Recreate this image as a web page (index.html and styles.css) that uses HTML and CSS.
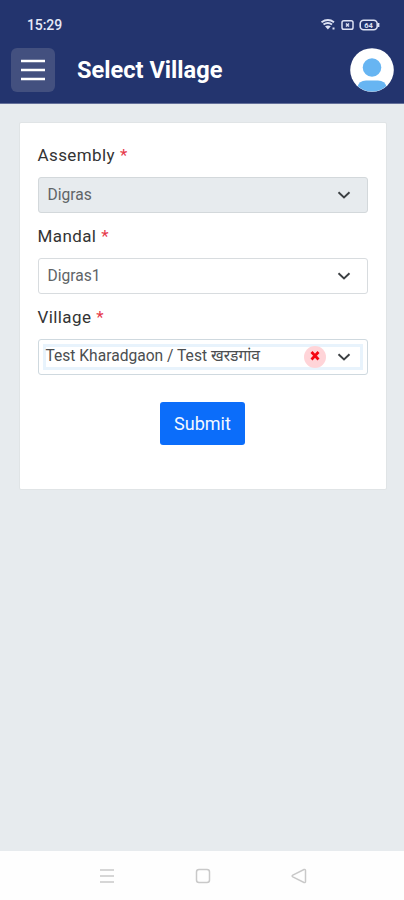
FILE: index.html
```html
<!DOCTYPE html>
<html lang="en">
<head>
<meta charset="utf-8">
<title>Select Village</title>
<link rel="stylesheet" href="styles.css">
</head>
<body>
<header class="top">
  <div class="status">
    <span class="time">15:29</span>
    <svg class="status-icons" width="60" height="14" viewBox="0 0 60 14" fill="none" stroke="#dce1f3">
      <path d="M1.500 4.200Q8 -.2 14 4.200M3.500 6.600Q8 3.400 12 6.600" stroke-width="1.900"/>
      <path d="M5 8.300Q8 6.500 10.800 8.300L7.900 11.400Z" fill="#dce1f3" stroke="none"/>
      <path d="M12.500 10.500h2" stroke-width="2"/>
      <rect x="22" y="2.700" width="11" height="8.600" rx="1.800" stroke-width="1.500"/>
      <path d="M26 5.500l3 3m0-3l-3 3" stroke-width="1.500"/>
      <rect x="40.200" y="2.200" width="17" height="9.600" rx="3.500" stroke-width="1.600"/>
      <path d="M58.700 5v4" stroke-width="1.400"/>
      <text x="44.300" y="10" class="battery">64</text>
    </svg>
  </div>
  <div class="bar">
    <button class="menu" aria-label="Menu">
      <svg width="24" height="22" viewBox="0 0 24 22"><path d="M0 2h24M0 11h24M0 20h24" stroke="#fff" stroke-width="2.500"/></svg>
    </button>
    <h1>Select Village</h1>
    <svg class="avatar" width="44" height="44" viewBox="0 0 44 44">
      <defs><clipPath id="disc"><circle cx="22" cy="22" r="21.600"/></clipPath></defs>
      <circle cx="22" cy="22" r="21.800" fill="#fff"/>
      <g fill="#67b5f2" clip-path="url(#disc)"><circle cx="22" cy="19.500" r="9.300"/><path d="M7 44v-4.500q2-7 9-7h12q7 0 9 7v4.500Z"/></g>
    </svg>
  </div>
</header>
<main>
  <form class="card">
    <label><span>Assembly</span><b>*</b></label>
    <div class="field disabled"><span>Digras</span><svg class="chev" width="14" height="8" viewBox="0 0 14 8"><path d="M1.500 1.200L7 6.400l5.500-5.200"/></svg></div>
    <label><span>Mandal</span><b>*</b></label>
    <div class="field"><span>Digras1</span><svg class="chev" width="14" height="8" viewBox="0 0 14 8"><path d="M1.500 1.200L7 6.400l5.500-5.200"/></svg></div>
    <label><span>Village</span><b>*</b></label>
    <div class="field focus"><span>Test Kharadgaon / Test <span class="hi">खरडगांव</span></span><span class="clear"><svg width="10" height="10" viewBox="0 0 10 10"><path d="M1.500 1l7 7.500M8.500 1l-7 7.500" stroke="#f50612" stroke-width="2.700"/></svg></span><svg class="chev" width="14" height="8" viewBox="0 0 14 8"><path d="M1.500 1.200L7 6.400l5.500-5.200"/></svg></div>
    <button type="button" class="submit">Submit</button>
  </form>
</main>
<nav>
  <svg width="16" height="16" viewBox="0 0 16 16"><path d="M1 2h14M1 8h14M1 14h14"/></svg>
  <svg width="16" height="16" viewBox="0 0 16 16"><rect x="1.500" y="1.500" width="13" height="13" rx="2.500"/></svg>
  <svg width="16" height="16" viewBox="0 0 16 16"><path d="M1.800 7.200L13 1.500q1.500-.5 1.500 1v11q0 1.500-1.500 1L1.800 8.800q-1.400-.8 0-1.600Z"/></svg>
</nav>
</body>
</html>
```
FILE: styles.css
```css
* { box-sizing: border-box; }
body {
  margin: 0;
  height: 900px;
  display: flex;
  flex-direction: column;
  background: #e7ebee;
  font-family: Roboto, "Noto Sans", sans-serif;
  color: #333;
  overflow: hidden;
}
.top { height: 104px; background: #23346e; border-bottom: 1px solid #64709a; }
.status {
  height: 48px;
  padding: 2px 24px 0 27px;
  display: flex;
  align-items: center;
  justify-content: space-between;
}
.time { color: #e6e9f7; font-size: 14px; font-weight: 500; letter-spacing: -.1px; }
.battery { font: 700 7.5px Roboto, sans-serif; fill: #dce1f3; stroke: none; }
.bar { display: flex; align-items: center; height: 44px; padding: 0 10px 0 11px; }
.menu {
  width: 44px;
  height: 44px;
  border: 0;
  border-radius: 6px;
  padding: 0;
  background: #43507f;
  display: flex;
  align-items: center;
  justify-content: center;
}
h1 { margin: 0 auto 0 22px; color: #fff; font-size: 23.6px; font-weight: 700; line-height: 44px; white-space: nowrap; }
main { flex: 1; padding: 18px 17.5px 0 18.5px; }
.card {
  height: 368px;
  padding: 20px 18px 0;
  background: #fff;
  border: 1px solid #e0e4e6;
  border-radius: 2px;
}
label {
  display: flex;
  gap: 5px;
  height: 27px;
  margin-top: -1px;
  line-height: 27px;
  font-size: 17px;
  letter-spacing: .4px;
}
label b { color: #e6394b; font-weight: 400; }
.field {
  height: 36px;
  margin: 8px 0 11px;
  padding: 0 16px 0 9px;
  display: flex;
  align-items: center;
  border: 1px solid #d8dcdf;
  border-radius: 3px;
  font-size: 15.6px;
  color: #606467;
}
.field > span:first-child { margin-right: auto; white-space: nowrap; }
.disabled { background: #e7ebee; border-color: #d3d8db; }
.focus {
  padding-left: 7px;
  border-color: #cfd9df;
  color: #4b4e50;
  box-shadow: inset 0 0 0 4px #fff, inset 0 0 0 7px #e8f3fc;
}
.hi { font-family: "Noto Sans Devanagari", "Noto Sans", sans-serif; }
.chev { fill: none; stroke: #3b3f42; stroke-width: 1.9; }
.clear {
  width: 22px;
  height: 22px;
  margin-right: 11px;
  border-radius: 50%;
  background: #ffd4d8;
  display: flex;
  align-items: center;
  justify-content: center;
}
.clear svg { margin-top: -3px; }
.submit {
  display: block;
  width: 85px;
  height: 43px;
  margin: 27px auto 0;
  padding: 0;
  border: 0;
  border-radius: 3px;
  background: #0b6dfa;
  color: #f4f8ff;
  font: 400 18px Roboto, sans-serif;
}
nav { height: 49px; background: #fefefe; display: flex; align-items: center; gap: 80px; padding: 1px 0 0 98.5px; }
nav svg { fill: none; stroke: #c9c9c9; stroke-width: 1.5; }
```
